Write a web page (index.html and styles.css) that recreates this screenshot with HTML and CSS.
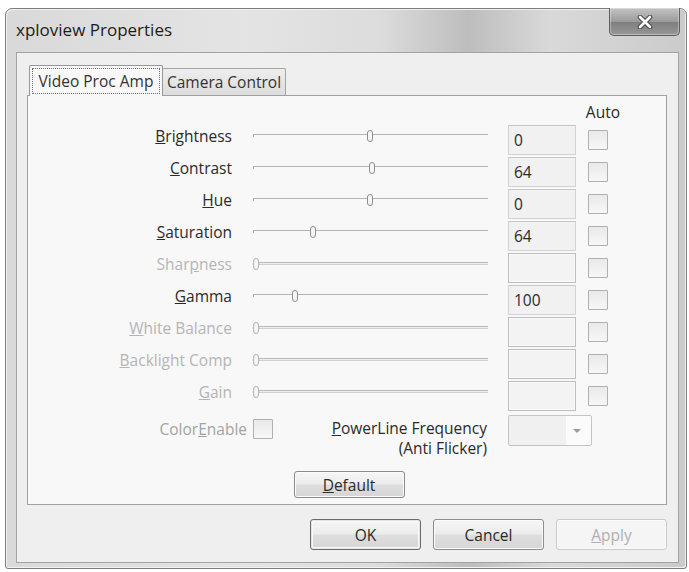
FILE: index.html
```html
<!DOCTYPE html>
<html lang="en">
<head>
    <meta charset="UTF-8">
    <title>xploview Properties</title>
    <link rel="stylesheet" href="styles.css">
</head>
<body>
    <div class="window">
        <div class="titlebar">
            <span class="title">xploview Properties</span>
            <div class="close-btn">
                <svg width="18" height="14" viewBox="0 0 18 14">
                    <path d="M4 2 L14 12 M14 2 L4 12" stroke="#4a4a4a" stroke-width="4.6" stroke-linecap="round"/>
                    <path d="M4 2 L14 12 M14 2 L4 12" stroke="#ffffff" stroke-width="2.6" stroke-linecap="round"/>
                </svg>
            </div>
        </div>

        <div class="client">
            <div class="tabs">
                <div class="tab selected"><span class="focus">Video Proc Amp</span></div>
                <div class="tab">Camera Control</div>
            </div>

            <div class="panel">
                <div class="auto-head">Auto</div>

                <div class="row">
                    <div class="label"><u>B</u>rightness</div>
                    <div class="slider"><div class="track"></div><div class="thumb" style="left: 117px"></div></div>
                    <div class="value">0</div>
                    <div class="check"></div>
                </div>
                <div class="row">
                    <div class="label"><u>C</u>ontrast</div>
                    <div class="slider"><div class="track"></div><div class="thumb" style="left: 119px"></div></div>
                    <div class="value">64</div>
                    <div class="check"></div>
                </div>
                <div class="row">
                    <div class="label"><u>H</u>ue</div>
                    <div class="slider"><div class="track"></div><div class="thumb" style="left: 117px"></div></div>
                    <div class="value">0</div>
                    <div class="check"></div>
                </div>
                <div class="row">
                    <div class="label"><u>S</u>aturation</div>
                    <div class="slider"><div class="track"></div><div class="thumb" style="left: 60px"></div></div>
                    <div class="value">64</div>
                    <div class="check"></div>
                </div>
                <div class="row disabled">
                    <div class="label">Shar<u>p</u>ness</div>
                    <div class="slider"><div class="track"></div><div class="thumb" style="left: 3px"></div></div>
                    <div class="value"></div>
                    <div class="check"></div>
                </div>
                <div class="row">
                    <div class="label"><u>G</u>amma</div>
                    <div class="slider"><div class="track"></div><div class="thumb" style="left: 42px"></div></div>
                    <div class="value">100</div>
                    <div class="check"></div>
                </div>
                <div class="row disabled">
                    <div class="label"><u>W</u>hite Balance</div>
                    <div class="slider"><div class="track"></div><div class="thumb" style="left: 3px"></div></div>
                    <div class="value"></div>
                    <div class="check"></div>
                </div>
                <div class="row disabled">
                    <div class="label"><u>B</u>acklight Comp</div>
                    <div class="slider"><div class="track"></div><div class="thumb" style="left: 3px"></div></div>
                    <div class="value"></div>
                    <div class="check"></div>
                </div>
                <div class="row disabled">
                    <div class="label"><u>G</u>ain</div>
                    <div class="slider"><div class="track"></div><div class="thumb" style="left: 3px"></div></div>
                    <div class="value"></div>
                    <div class="check"></div>
                </div>

                <div class="row last">
                    <div class="color-label">Color<u>E</u>nable</div>
                    <div class="check small-gap"></div>
                    <div class="powerline"><u>P</u>owerLine Frequency<br>(Anti Flicker)</div>
                    <div class="dropdown">
                        <div class="dropdown-arrow"></div>
                    </div>
                </div>

                <div class="default-row">
                    <button class="btn default"><u>D</u>efault</button>
                </div>
            </div>

            <div class="buttons">
                <button class="btn ok">OK</button>
                <button class="btn">Cancel</button>
                <button class="btn disabled-btn"><u>A</u>pply</button>
            </div>
        </div>
    </div>
</body>
</html>
```

FILE: styles.css
```css
* {
    margin: 0;
    padding: 0;
    box-sizing: border-box;
}

body {
    font-family: 'Open Sans', 'Noto Sans', sans-serif;
    font-size: 15.5px;
    color: #2a2a2a;
    background-color: #ffffff;
}

.window {
    margin: 8px 0 0 5px;
    width: 682px;
    border: 1px solid #7c7c7c;
    border-radius: 7px 7px 3px 3px;
    padding: 0 7px 5px 10px;
    background: linear-gradient(90deg, #d9d9d9 0%, #e4e4e4 35%, #dcdcdc 55%, #bdbdbd 68%, #d9d9d9 80%, #cbcbcb 100%);
    box-shadow: inset 1px 1px 0 #f2f2f2, inset -1px -1px 0 #f2f2f2;
}

.titlebar {
    height: 43px;
    display: flex;
    align-items: flex-start;
}

.title {
    padding-top: 11px;
    font-size: 17px;
    line-height: 20px;
    color: #1c1c1c;
}

.close-btn {
    margin-left: auto;
    margin-right: -1px;
    margin-top: -1px;
    width: 71px;
    height: 28px;
    border: 1px solid #5d5d5d;
    border-top: none;
    border-radius: 0 0 5px 5px;
    background: linear-gradient(#c4c4c4, #9b9b9b 50%, #7e7e7e 51%, #979797);
    box-shadow: inset 0 0 0 1px rgba(255, 255, 255, 0.35);
    display: flex;
    align-items: center;
    justify-content: center;
}

.client {
    border: 1px solid #a3a3a3;
    background-color: #efefef;
    padding: 0 11px 12px 10px;
}

.tabs {
    display: flex;
    align-items: flex-end;
    height: 31px;
    margin-top: 12px;
    margin-bottom: -1px;
    padding-left: 2px;
    position: relative;
    z-index: 1;
}

.tab {
    height: 27px;
    width: 124px;
    margin-bottom: 1px;
    border: 1px solid #a4a4a4;
    border-bottom: none;
    border-radius: 2px 2px 0 0;
    background: linear-gradient(#eeeeee, #dcdcdc);
    text-align: center;
    line-height: 26px;
    color: #333333;
}

.tab.selected {
    height: 31px;
    width: 134px;
    margin-bottom: 0;
    margin-right: -1px;
    border-color: #969696;
    background-color: #f8f8f8;
    background-image: none;
    padding: 2px;
    position: relative;
    z-index: 2;
}

.focus {
    display: block;
    height: 26px;
    line-height: 24px;
    border: 1px dotted #6f6f6f;
}

.panel {
    border: 1px solid #a0a0a0;
    background-color: #f8f8f8;
    padding-bottom: 6px;
}

.auto-head {
    height: 29px;
    padding-top: 6px;
    padding-right: 46px;
    line-height: 20px;
    text-align: right;
}

.row {
    display: flex;
    align-items: flex-start;
    height: 32px;
}

.label {
    width: 204px;
    text-align: right;
    line-height: 22px;
    white-space: nowrap;
}

.slider {
    position: relative;
    width: 235px;
    height: 22px;
    margin-left: 21px;
}

.track {
    margin-top: 10px;
    height: 1px;
    background-color: #b4b4b4;
}

.track::before {
    content: '';
    display: block;
    width: 1px;
    height: 3px;
    margin-top: -1px;
    background-color: #a8a8a8;
}

.thumb {
    position: absolute;
    top: 5px;
    width: 6px;
    height: 12px;
    margin-left: -3px;
    border: 1px solid #8e8e8e;
    border-radius: 3px;
    background-color: #f5f5f5;
}

.value {
    width: 68px;
    height: 30px;
    margin-left: 20px;
    border: 1px solid #d2d2d2;
    border-top-color: #c6c6c6;
    background-color: #f1f1f1;
    padding-left: 5px;
    line-height: 28px;
}

.check {
    width: 20px;
    height: 20px;
    margin-left: 12px;
    margin-top: 5px;
    border: 1px solid #b0b0b0;
    border-radius: 1px;
    background: linear-gradient(#e9e9e9, #f7f7f7);
}

.row.disabled .label {
    color: #b5b5b5;
}

.row.disabled .track {
    height: 3px;
    margin-top: 9px;
    background-color: #ececec;
    border-top: 1px solid #b9b9b9;
    border-bottom: 1px solid #cfcfcf;
}

.row.disabled .track::before {
    display: none;
}

.row.disabled .thumb {
    border-color: #b3b3b3;
}

.row.disabled .value {
    border-color: #bdbdbd;
    background-color: #f3f3f3;
    box-shadow: inset 0 0 0 1px #fafafa;
}

.row.last {
    height: 44px;
}

.color-label {
    width: 219px;
    margin-top: 5px;
    text-align: right;
    line-height: 22px;
    color: #a3a3a3;
}

.check.small-gap {
    margin-left: 6px;
    margin-top: 6px;
}

.powerline {
    width: 214px;
    margin-top: 5px;
    text-align: right;
    line-height: 20px;
}

.dropdown {
    position: relative;
    width: 84px;
    height: 31px;
    margin-left: 21px;
    margin-top: 2px;
    border: 1px solid #c4c4c4;
    border-radius: 2px;
    background: linear-gradient(90deg, #f0f0f0 0%, #f0f0f0 70%, #fbfbfb 70%);
}

.dropdown-arrow {
    position: absolute;
    right: 10px;
    top: 13px;
    width: 0;
    height: 0;
    border-left: 4px solid transparent;
    border-right: 4px solid transparent;
    border-top: 4px solid #9c9c9c;
}

.default-row {
    display: flex;
    justify-content: center;
    margin-top: 14px;
    padding-left: 4px;
}

.btn {
    font-family: 'Open Sans', 'Noto Sans', sans-serif;
    font-size: 15.5px;
    color: #2a2a2a;
    width: 111px;
    height: 31px;
    border: 1px solid #8c8c8c;
    border-radius: 3px;
    background: linear-gradient(#f6f6f6 0%, #ececec 48%, #dedede 52%, #d6d6d6 100%);
    box-shadow: inset 0 0 0 1px #fbfbfb;
}

.btn.default {
    height: 27px;
}

.buttons {
    display: flex;
    justify-content: flex-end;
    gap: 12px;
    margin-top: 14px;
}

.btn.ok {
    border-color: #6c6c6c;
    box-shadow: inset 0 0 0 1px #e4e4e4, inset 0 0 0 2px #f8f8f8;
}

.btn.disabled-btn {
    color: #b0b0b0;
    border-color: #cacaca;
    background: #f5f5f5;
}
```
